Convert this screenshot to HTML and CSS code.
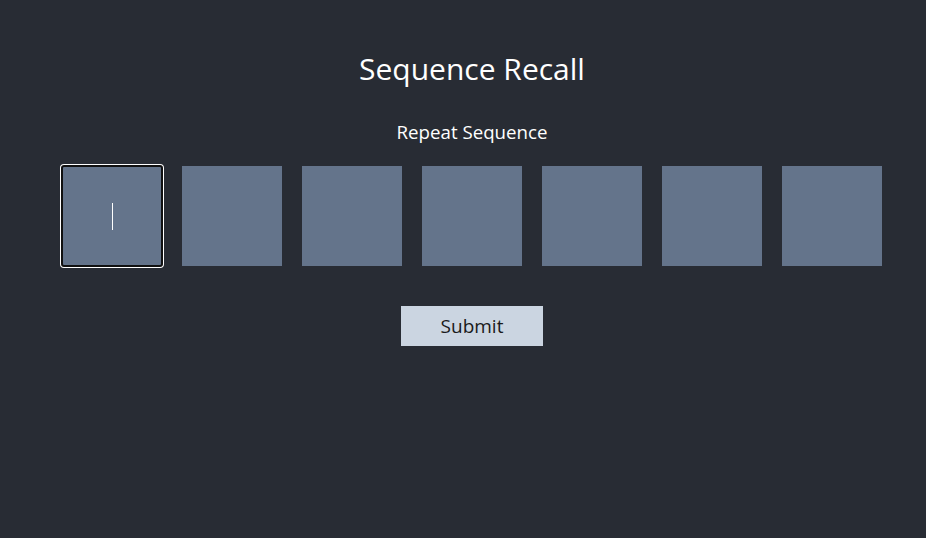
FILE: index.html
```html
<!DOCTYPE html>
<html>
<head>
<meta charset="utf-8">
<link rel="stylesheet" href="styles.css">
</head>
<body>
<div class="app">
  <h1 class="title">Sequence Recall</h1>
  <p class="subtitle">Repeat Sequence</p>
  <div class="cells">
    <div class="cell focused"><span class="caret"></span></div>
    <div class="cell"></div>
    <div class="cell"></div>
    <div class="cell"></div>
    <div class="cell"></div>
    <div class="cell"></div>
    <div class="cell"></div>
  </div>
  <button class="submit">Submit</button>
</div>
</body>
</html>
```
FILE: styles.css
```css
html, body {
  margin: 0;
  padding: 0;
  background: #282c34;
  height: 100%;
}
body {
  font-family: "Open Sans", "Noto Sans", sans-serif;
  color: #ffffff;
}
.app {
  display: flex;
  flex-direction: column;
  align-items: center;
  padding-left: 18px;
  padding-top: 48px;
}
.title {
  margin: 0;
  font-size: 30px;
  font-weight: 400;
  line-height: 42px;
}
.subtitle {
  margin: 29px 0 0 0;
  font-size: 18.7px;
  line-height: 26px;
}
.cells {
  display: flex;
  gap: 20px;
  margin-top: 21px;
}
.cell {
  width: 100px;
  height: 100px;
  background: #64748b;
  display: flex;
  align-items: center;
  justify-content: center;
  position: relative;
}
.cell.focused {
  outline: 2px solid #101010;
  outline-offset: -1px;
  border-radius: 2px;
  box-shadow: 0 0 0 2px #ffffff;
}
.caret {
  width: 1px;
  height: 27px;
  background: #ffffff;
}
.submit {
  margin-top: 40px;
  width: 142px;
  height: 40px;
  border: none;
  background: #cbd5e1;
  color: #1a1a1a;
  font-family: "Open Sans", "Noto Sans", sans-serif;
  font-size: 19px;
  padding: 0;
}
```
